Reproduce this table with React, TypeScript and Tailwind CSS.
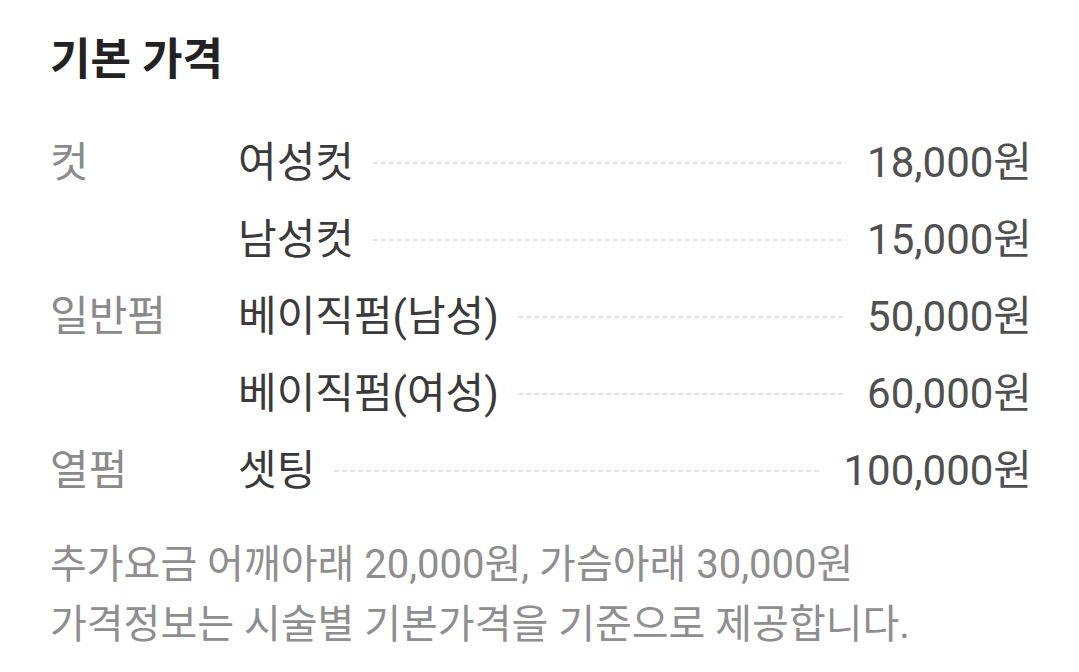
const rows = [
  { cat: '컷', name: '여성컷', price: '18,000원' },
  { cat: '', name: '남성컷', price: '15,000원' },
  { cat: '일반펌', name: '베이직펌(남성)', price: '50,000원' },
  { cat: '', name: '베이직펌(여성)', price: '60,000원' },
  { cat: '열펌', name: '셋팅', price: '100,000원' },
];

export default function App() {
  return (
    <div className="w-[1079px] h-[672px] bg-white pl-[50px] pr-[47px] pt-[36px] font-['Roboto','Noto_Sans_CJK_KR',sans-serif]">
      <h1 className="h-[48px] leading-[48px] text-[44px] font-bold text-[#222222]">기본 가격</h1>

      <div className="mt-[40px]">
        {rows.map((r, i) => (
          <div key={i} className="flex h-[77px] items-center text-[42px]">
            <div className="w-[188px] shrink-0 text-[#8a8a8a]">{r.cat}</div>
            <div className="shrink-0 text-[#3a3a3a]">{r.name}</div>
            <div className="ml-[19px] mr-[21px] h-[2px] flex-1 bg-[linear-gradient(to_right,#e4e4e4_5px,transparent_5px)] bg-[length:8px_2px] bg-repeat-x" />
            <div className="shrink-0 text-[#505050]">{r.price}</div>
          </div>
        ))}
      </div>

      <div className="mt-[26px] text-[40px] leading-[60px] text-[#8e8e8e]">
        <p>추가요금 어깨아래 20,000원, 가슴아래 30,000원</p>
        <p>가격정보는 시술별 기본가격을 기준으로 제공합니다.</p>
      </div>
    </div>
  );
}
